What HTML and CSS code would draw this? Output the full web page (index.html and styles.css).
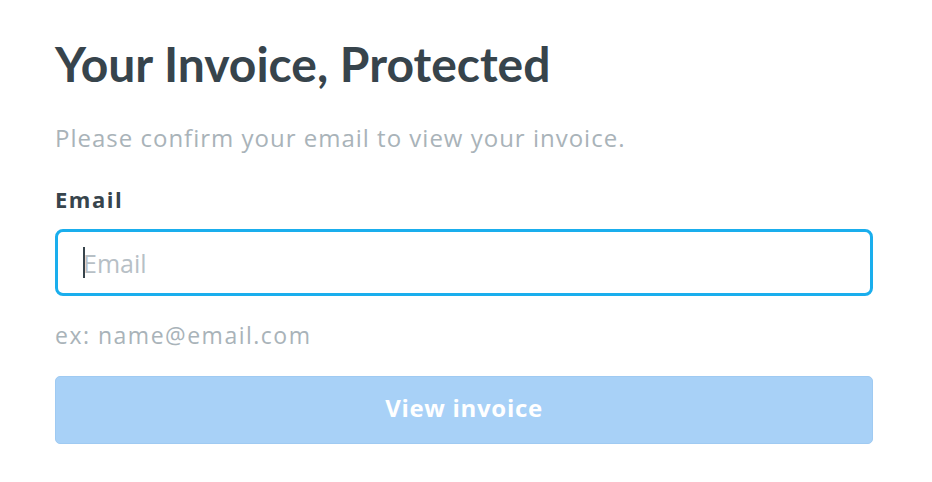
FILE: index.html
```html
<!DOCTYPE html>
<html lang="en">
<head>
<meta charset="utf-8">
<title>Your Invoice, Protected</title>
<link rel="stylesheet" href="styles.css">
</head>
<body>
<main class="card">
  <h1 class="title">Your Invoice, Protected</h1>
  <p class="subtitle">Please confirm your email to view your invoice.</p>
  <form class="form">
    <label class="label" for="email">Email</label>
    <div class="field">
      <span class="caret"></span>
      <input class="input" id="email" type="email" placeholder="Email">
    </div>
    <p class="hint">ex: name@email.com</p>
    <button class="button" type="button" disabled>View invoice</button>
  </form>
</main>
</body>
</html>
```

FILE: styles.css
```css
html, body {
  margin: 0;
  padding: 0;
  background: #ffffff;
}

body {
  font-family: "Open Sans", "Liberation Sans", sans-serif;
  color: #37444c;
}

.card {
  width: 818px;
  padding: 36px 55px 0;
}

.title {
  margin: 0;
  font-family: "Lato", "Open Sans", sans-serif;
  font-size: 48px;
  line-height: 56px;
  font-weight: 700;
  color: #37444c;
}

.subtitle {
  margin: 31px 0 0;
  font-size: 24px;
  line-height: 30px;
  letter-spacing: 1px;
  color: #a9b3b9;
}

.form {
  display: flex;
  flex-direction: column;
  margin-top: 33px;
}

.label {
  font-size: 22px;
  line-height: 26px;
  font-weight: 700;
  letter-spacing: 1.5px;
  color: #37444c;
}

.field {
  position: relative;
  margin-top: 17px;
}

.input {
  box-sizing: border-box;
  width: 100%;
  height: 67px;
  border: 3px solid #1aaeed;
  border-radius: 8px;
  padding: 0 25px;
  font-family: inherit;
  font-size: 25px;
  color: #37444c;
  outline: none;
  background: #fff;
}

.input::placeholder {
  color: #b7c0c6;
}

.caret {
  position: absolute;
  left: 28px;
  top: 18px;
  width: 2px;
  height: 31px;
  background: #37444c;
  z-index: 1;
}

.hint {
  margin: 26px 0 0;
  font-size: 23px;
  line-height: 26px;
  letter-spacing: 1.5px;
  color: #a9b3b9;
}

.button {
  box-sizing: border-box;
  margin-top: 28px;
  height: 68px;
  width: 100%;
  padding: 0 0 5px;
  border: 1px solid #9fcaf2;
  border-radius: 5px;
  background: #a8d1f7;
  color: #ffffff;
  font-family: inherit;
  font-size: 24px;
  font-weight: 700;
  letter-spacing: 0.7px;
  cursor: default;
}
```
